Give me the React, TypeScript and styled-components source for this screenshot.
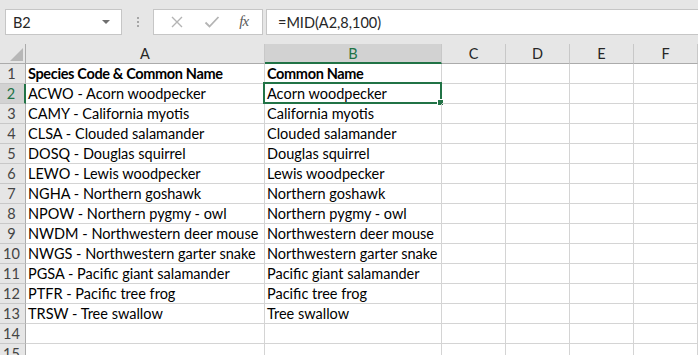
import styled, { createGlobalStyle } from "styled-components";

const GlobalStyle = createGlobalStyle`
  html, body {
    margin: 0;
    padding: 0;
    background: #ffffff;
    overflow: hidden;
  }
  body {
    font-family: Lato, "Liberation Sans", sans-serif;
  }
`;

const rows: [string, string][] = [
  ["Species Code & Common Name", "Common Name"],
  ["ACWO - Acorn woodpecker", "Acorn woodpecker"],
  ["CAMY - California myotis", "California myotis"],
  ["CLSA - Clouded salamander", "Clouded salamander"],
  ["DOSQ - Douglas squirrel", "Douglas squirrel"],
  ["LEWO - Lewis woodpecker", "Lewis woodpecker"],
  ["NGHA - Northern goshawk", "Northern goshawk"],
  ["NPOW - Northern pygmy - owl", "Northern pygmy - owl"],
  ["NWDM - Northwestern deer mouse", "Northwestern deer mouse"],
  ["NWGS - Northwestern garter snake", "Northwestern garter snake"],
  ["PGSA - Pacific giant salamander", "Pacific giant salamander"],
  ["PTFR - Pacific tree frog", "Pacific tree frog"],
  ["TRSW - Tree swallow", "Tree swallow"],
  ["", ""],
  ["", ""],
];

const columns = ["A", "B", "C", "D", "E", "F"];

const Window = styled.div`
  width: 698px;
  height: 355px;
  display: flex;
  flex-direction: column;
  background: #e6e6e6;
  overflow: hidden;
`;

const FormulaBar = styled.div`
  height: 44px;
  flex-shrink: 0;
  display: flex;
  align-items: flex-start;
  padding: 9px 0 0 5px;
  box-sizing: border-box;
`;

const Box = styled.div`
  height: 26px;
  box-sizing: border-box;
  background: #ffffff;
  border: 1px solid #c6c6c6;
  display: flex;
  align-items: center;
`;

const NameBox = styled(Box)`
  width: 117px;
  padding: 0 0 0 7px;
  justify-content: space-between;
  font-size: 14.5px;
  color: #262626;
`;

const Caret = styled.span`
  width: 0;
  height: 0;
  margin-right: 11px;
  border-left: 4px solid transparent;
  border-right: 4px solid transparent;
  border-top: 4px solid #6f6f6f;
`;

const Grip = styled.div`
  width: 31px;
  height: 26px;
  display: flex;
  flex-direction: column;
  align-items: center;
  justify-content: center;
  gap: 2px;
`;

const GripDot = styled.span`
  width: 2px;
  height: 2px;
  background: #a6a6a6;
`;

const ButtonsBox = styled(Box)`
  width: 110px;
  justify-content: space-around;
  padding: 0 4px 0 6px;
`;

const Fx = styled.span`
  font-family: "Liberation Serif", serif;
  font-style: italic;
  font-size: 15px;
  color: #595959;
  letter-spacing: -1px;
  padding-bottom: 2px;
`;

const FormulaInput = styled(Box)`
  flex: 1;
  margin-left: 3px;
  border-right: none;
  padding-left: 11px;
  font-size: 14.5px;
  color: #262626;
`;

const Grid = styled.div`
  flex: 1;
  display: grid;
  grid-template-columns: 26px 239px 177px 64px 64px 64px 64px;
  grid-auto-rows: 20px;
  background: #ffffff;
`;

const Corner = styled.div`
  background: #e6e6e6;
  border-right: 1px solid #ababab;
  border-bottom: 1px solid #ababab;
  display: flex;
  align-items: flex-end;
  justify-content: flex-end;
  padding: 0 2px 2px 0;
`;

const CornerTriangle = styled.span`
  width: 0;
  height: 0;
  border-left: 13px solid transparent;
  border-bottom: 13px solid #b7b7b7;
`;

const ColHeader = styled.div<{ $active?: boolean }>`
  background: ${({ $active }) => ($active ? "#d2d2d2" : "#e6e6e6")};
  border-right: 1px solid #c8c8c8;
  border-bottom: ${({ $active }) => ($active ? "2px solid #217346" : "1px solid #ababab")};
  display: flex;
  align-items: center;
  justify-content: center;
  font-size: 14.5px;
  color: ${({ $active }) => ($active ? "#217346" : "#262626")};
  box-sizing: border-box;
`;

const RowHeader = styled.div<{ $active?: boolean }>`
  background: ${({ $active }) => ($active ? "#d2d2d2" : "#e6e6e6")};
  border-right: ${({ $active }) => ($active ? "2px solid #217346" : "1px solid #ababab")};
  border-bottom: 1px solid #c8c8c8;
  display: flex;
  align-items: center;
  justify-content: center;
  padding-right: 2px;
  font-size: 14.5px;
  color: ${({ $active }) => ($active ? "#217346" : "#444444")};
  box-sizing: border-box;
`;

const Cell = styled.div<{ $bold?: boolean }>`
  position: relative;
  border-right: 1px solid #d4d4d4;
  border-bottom: 1px solid #d4d4d4;
  padding: 0 0 0 2px;
  display: flex;
  align-items: center;
  font-size: 14.5px;
  font-weight: ${({ $bold }) => ($bold ? 700 : 400)};
  letter-spacing: ${({ $bold }) => ($bold ? "-0.35px" : "0")};
  color: #000000;
  white-space: nowrap;
  overflow: visible;
  box-sizing: border-box;
`;

const Selection = styled.div`
  position: absolute;
  left: -2px;
  top: -2px;
  right: -1px;
  bottom: -1px;
  border: 2px solid #217346;
  pointer-events: none;
`;

const FillHandle = styled.span`
  position: absolute;
  right: -4px;
  bottom: -4px;
  width: 5px;
  height: 5px;
  background: #217346;
  border: 1px solid #ffffff;
`;

function CancelIcon() {
  return (
    <svg width="14" height="14" viewBox="0 0 14 14">
      <path d="M2 2 L12 12 M12 2 L2 12" stroke="#b4b4b4" strokeWidth="1.4" fill="none" />
    </svg>
  );
}

function EnterIcon() {
  return (
    <svg width="16" height="14" viewBox="0 0 16 14">
      <path d="M1.5 7.5 L5.5 11.5 L14.5 2" stroke="#b4b4b4" strokeWidth="1.8" fill="none" />
    </svg>
  );
}

export default function App() {
  return (
    <>
      <GlobalStyle />
      <Window>
        <FormulaBar>
          <NameBox>
            B2
            <Caret />
          </NameBox>
          <Grip>
            <GripDot />
            <GripDot />
            <GripDot />
          </Grip>
          <ButtonsBox>
            <CancelIcon />
            <EnterIcon />
            <Fx>fx</Fx>
          </ButtonsBox>
          <FormulaInput>=MID(A2,8,100)</FormulaInput>
        </FormulaBar>
        <Grid>
          <Corner>
            <CornerTriangle />
          </Corner>
          {columns.map((c) => (
            <ColHeader key={c} $active={c === "B"}>
              {c}
            </ColHeader>
          ))}
          {rows.map(([a, b], i) => {
            const n = i + 1;
            return [
              <RowHeader key={`h${n}`} $active={n === 2}>
                {n}
              </RowHeader>,
              <Cell key={`a${n}`} $bold={n === 1}>
                {a}
              </Cell>,
              <Cell key={`b${n}`} $bold={n === 1}>
                {b}
                {n === 2 && (
                  <Selection>
                    <FillHandle />
                  </Selection>
                )}
              </Cell>,
              ...["C", "D", "E", "F"].map((c) => <Cell key={`${c}${n}`} />),
            ];
          })}
        </Grid>
      </Window>
    </>
  );
}
